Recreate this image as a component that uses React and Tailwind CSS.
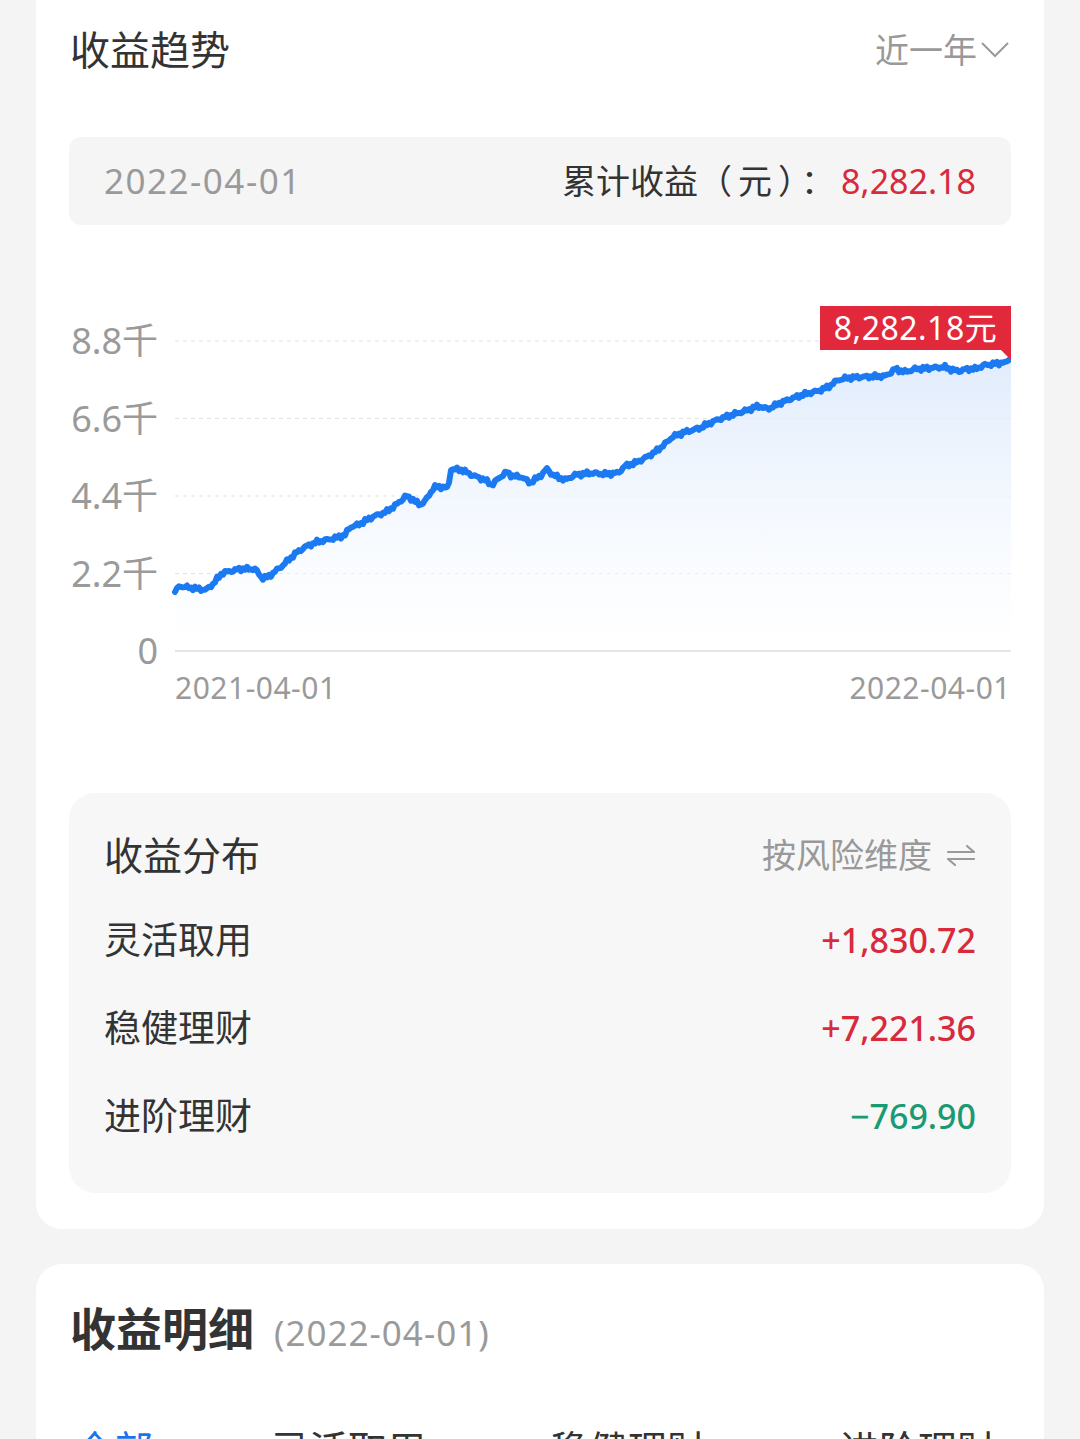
import React from 'react';

const keyPts = [
  [175, 592], [178, 586], [200, 589], [206, 590], [214, 583], [222, 573], [240, 569], [255, 569],
  [262, 578], [268, 577], [282, 566], [296, 553], [305, 547], [317, 542], [335, 538], [345, 535],
  [350, 527], [358, 525], [372, 517], [386, 512], [396, 505], [406, 496], [412, 499], [420, 505],
  [426, 500], [434, 487], [444, 487], [448, 489], [451, 469], [462, 470], [472, 475], [485, 480],
  [492, 485], [500, 477], [507, 472], [512, 476], [522, 477], [530, 483], [540, 476], [547, 469],
  [553, 475], [565, 480], [575, 475], [590, 473], [605, 474], [618, 473], [625, 466], [635, 463],
  [645, 458], [655, 452], [665, 444], [672, 437], [685, 432], [700, 428], [712, 422], [722, 418],
  [735, 414], [748, 410], [758, 406], [768, 409], [778, 404], [790, 399], [805, 394], [818, 391],
  [828, 387], [838, 380], [847, 378], [860, 377], [886, 376], [895, 369], [905, 372], [915, 369],
  [930, 368], [945, 367], [952, 370], [960, 371], [966, 369], [975, 369], [985, 365], [1000, 363],
  [1008, 361], [1011, 358],
];

// origin of the chart svg in page coords
const OX = 69;
const OY = 300;

function buildLine() {
  const out = [];
  let k = 0;
  for (let x = 175; x <= 1011; x += 2) {
    while (k < keyPts.length - 2 && keyPts[k + 1][0] < x) k++;
    const [x0, y0] = keyPts[k];
    const [x1, y1] = keyPts[k + 1];
    const t = x1 === x0 ? 0 : Math.min(1, Math.max(0, (x - x0) / (x1 - x0)));
    let y = y0 + (y1 - y0) * t;
    if (x > 177 && x < 1005) y += (Math.sin(x * 1.7) + Math.sin(x * 0.63) * 0.8) * 1.3;
    out.push([x - OX, y - OY]);
  }
  out.push([1011 - OX, 358 - OY]);
  return out;
}

const line = buildLine();
const linePath = line.map(([x, y], i) => `${i ? 'L' : 'M'}${x.toFixed(1)} ${y.toFixed(1)}`).join(' ');
const areaPath = `${linePath} L${1011 - OX} 351 L${175 - OX} 351 Z`;

const yTicks = [
  { label: '8.8千', y: 41 },
  { label: '6.6千', y: 118.5 },
  { label: '4.4千', y: 196 },
  { label: '2.2千', y: 273.5 },
  { label: '0', y: 351 },
];

function TrendChart() {
  return (
    <div className="relative mt-[75px] h-[410px] w-full">
      <svg width="942" height="410" viewBox="0 0 942 410" className="block">
        <defs>
          <linearGradient id="area" x1="0" y1="0" x2="0" y2="1">
            <stop offset="0" stopColor="#dbe8fc" stopOpacity="0.85" />
            <stop offset="1" stopColor="#ffffff" stopOpacity="0.4" />
          </linearGradient>
        </defs>
        {yTicks.slice(0, 4).map((t) => (
          <line key={t.label} x1="106" x2="942" y1={t.y} y2={t.y} stroke="#e3e3e3" strokeWidth="1" strokeDasharray="4 4" />
        ))}
        <path d={areaPath} fill="url(#area)" />
        <line x1="106" x2="942" y1="351" y2="351" stroke="#dedede" strokeWidth="1.5" />
        <path d={linePath} fill="none" stroke="#1b7af2" strokeWidth="6" strokeLinejoin="round" strokeLinecap="round" />
        {yTicks.map((t) => (
          <text key={t.label} x="89" y={t.y + 13} textAnchor="end" fontSize="36" fill="#9a9a9a">
            {t.label}
          </text>
        ))}
        <text x="106" y="399" fontSize="30" letterSpacing="0.5" fill="#9a9a9a">2021-04-01</text>
        <text x="942" y="399" textAnchor="end" fontSize="30" letterSpacing="0.5" fill="#9a9a9a">2022-04-01</text>
        <polygon points="931,49 942,49 942,60" fill="#e2283b" />
      </svg>
      <div className="absolute right-0 top-[6px] flex h-[44px] w-[191px] items-center justify-center bg-[#e2283b] text-[32px] leading-none tracking-[0.5px] text-white">
        8,282.18元
      </div>
    </div>
  );
}

function SwapIcon() {
  return (
    <svg width="30" height="22" viewBox="0 0 30 22" fill="none" stroke="#9a9a9a" strokeWidth="2.2" strokeLinecap="round" strokeLinejoin="round">
      <path d="M2 8h26l-7-6" />
      <path d="M28 15H2l7 6" />
    </svg>
  );
}

const dist = [
  { name: '灵活取用', value: '+1,830.72', color: 'text-[#d72a3c]' },
  { name: '稳健理财', value: '+7,221.36', color: 'text-[#d72a3c]' },
  { name: '进阶理财', value: '−769.90', color: 'text-[#1a9a72]' },
];

export default function App() {
  return (
    <div className="min-h-screen overflow-hidden bg-[#f4f4f4] px-[36px] pb-10 font-['Noto_Sans','Noto_Sans_CJK_SC',sans-serif]">
      <div className="rounded-b-[26px] bg-white px-[33px] pb-[36px] pt-[22px]">
        <div className="flex items-center justify-between">
          <h2 className="pl-[1px] text-[40px] leading-[56px] text-[#333]">收益趋势</h2>
          <div className="flex items-center gap-[4px] pr-[2px] text-[34px] leading-[56px] text-[#999]">
            <span>近一年</span>
            <svg width="28" height="16" viewBox="0 0 28 16" fill="none" stroke="#9a9a9a" strokeWidth="2">
              <path d="M1 1l13 13L27 1" />
            </svg>
          </div>
        </div>

        <div className="mt-[59px] flex h-[88px] items-center justify-between rounded-[12px] bg-[#f5f5f5] px-[35px]">
          <span className="text-[35px] tracking-[1.5px] text-[#9a9a9a]">2022-04-01</span>
          <span className="text-[34px] text-[#333]">
            累计收益<span className="tracking-[6px]">（元）：</span>
            <span className="text-[#d72a3c]">8,282.18</span>
          </span>
        </div>

        <TrendChart />

        <div className="mt-[83px] rounded-[26px] bg-[#f7f7f7] px-[35px] pb-[33px] pt-[34px]">
          <div className="flex items-center justify-between">
            <h3 className="text-[39px] leading-[56px] text-[#333]">收益分布</h3>
            <div className="flex items-center gap-[14px] text-[34px] text-[#999]">
              <span>按风险维度</span>
              <SwapIcon />
            </div>
          </div>
          <div className="mt-[13px]">
            {dist.map((d) => (
              <div key={d.name} className="flex h-[88px] items-center justify-between">
                <span className="text-[37px] text-[#333]">{d.name}</span>
                <span className={`text-[34px] font-medium ${d.color}`}>{d.value}</span>
              </div>
            ))}
          </div>
        </div>
      </div>

      <div className="mt-[35px] rounded-[26px] bg-white px-[34px] pb-10 pt-[34px]">
        <div className="flex items-baseline gap-[20px]">
          <h2 className="text-[46px] font-bold leading-[60px] text-[#333]">收益明细</h2>
          <span className="text-[35px] tracking-[1px] text-[#9a9a9a]">(2022-04-01)</span>
        </div>
        <div className="mt-[64px] flex text-[39px] leading-[50px] text-[#333]">
          <span className="w-[200px] pl-[5px] text-[#1a73e8]">全部</span>
          <span className="w-[280px]">灵活取用</span>
          <span className="w-[290px]">稳健理财</span>
          <span>进阶理财</span>
        </div>
      </div>
    </div>
  );
}
